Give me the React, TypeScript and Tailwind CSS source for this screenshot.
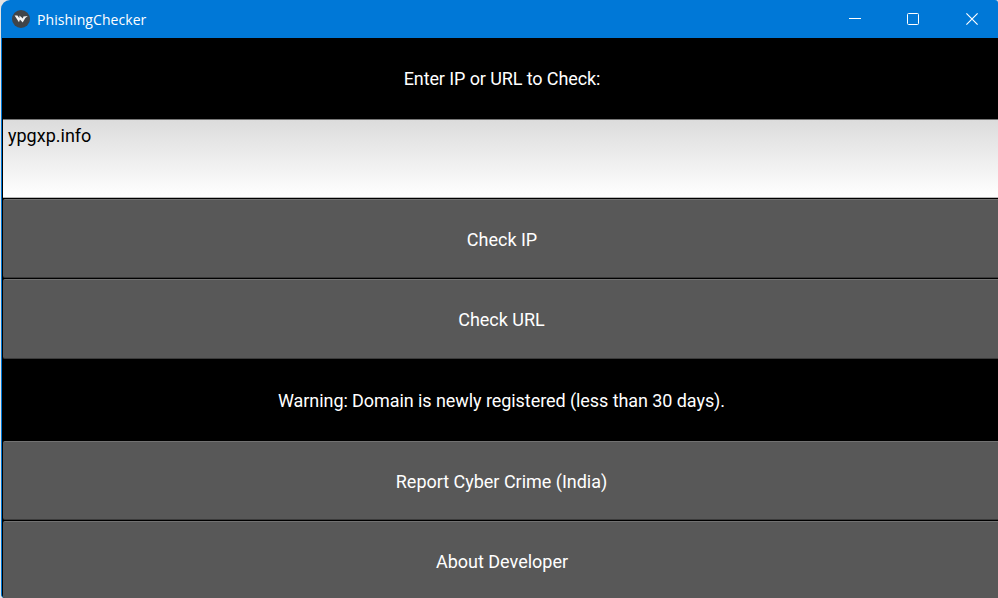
import React from "react";

function Label({ text, className }: { text: string; className: string }) {
  return (
    <div className={`flex shrink-0 items-center justify-center bg-black text-white ${className}`}>
      <span className="whitespace-nowrap">{text}</span>
    </div>
  );
}

function Button({ text, className }: { text: string; className: string }) {
  return (
    <button
      className={`flex shrink-0 items-center justify-center rounded-tl-[2px] rounded-bl-[2px] border-t border-b border-t-[#727272] border-b-[#3b3b3b] bg-[#585858] pt-[2px] text-white ${className}`}
    >
      <span className="whitespace-nowrap">{text}</span>
    </button>
  );
}

function TitleBar() {
  return (
    <header className="flex h-[38px] shrink-0 items-center rounded-tl-[9px] rounded-tr-[3px] bg-[#0078d7] pl-[11px]">
      <svg width="18" height="18" viewBox="0 0 18 18" className="shrink-0">
        <circle cx="9" cy="9" r="9" fill="#404448" />
        <path d="M2.6 5.4 5.4 5.5 7.4 8.3 7.4 5.4 10.9 8.6 11.4 6.4 15.8 6.1 13.3 8.1 10.7 12.6 7.9 9.5 7 12.2Z" fill="#f5f5f5" />
      </svg>
      <h1 className="ml-[7px] pt-[2px] font-['Open_Sans','Noto_Sans',sans-serif] text-[14px] leading-5 tracking-[0.06px] text-white">
        PhishingChecker
      </h1>
      <div className="ml-auto flex items-center pr-[20px] text-white">
        <svg width="12" height="12" viewBox="0 0 12 12" stroke="currentColor" fill="none">
          <path d="M0 5.5h12" />
        </svg>
        <svg width="12" height="12" viewBox="0 0 12 12" stroke="currentColor" fill="none" className="ml-[46px]">
          <rect x=".5" y=".5" width="11" height="11" rx="1" />
        </svg>
        <svg width="12" height="12" viewBox="0 0 12 12" stroke="currentColor" strokeWidth="1.15" fill="none" className="ml-[47px]">
          <path d="M.4.4 11.6 11.6M11.6.4.4 11.6" />
        </svg>
      </div>
    </header>
  );
}

export default function App() {
  return (
    <div className="h-[598px] w-[998px] overflow-hidden bg-[#e4e4e4] pl-px font-[Roboto,sans-serif] text-[18px] leading-[22px]">
      <TitleBar />
      <main className="h-[560px] overflow-hidden rounded-bl-[4px] border-l border-[#0078d7] bg-black pl-px">
        <div className="flex w-[998px] flex-col">
          <Label text="Enter IP or URL to Check:" className="h-[81px] tracking-[-0.1px]" />
          <div className="h-[79px] shrink-0 border-t border-b border-t-[#777777] border-b-[#bbbbbb] bg-linear-to-b from-[#dcdcdc] to-white pt-[5px] pl-[5px] text-black">
            ypgxp.info
          </div>
          <Button text="Check IP" className="mt-px h-[79px]" />
          <Button text="Check URL" className="mt-px h-[80px] pr-px" />
          <Label text="Warning: Domain is newly registered (less than 30 days)." className="h-[82px] pt-[2px] pr-px tracking-[-0.07px]" />
          <Button text="Report Cyber Crime (India)" className="h-[79px] pr-px tracking-[-0.02px]" />
          <Button text="About Developer" className="mt-px h-[80px]" />
        </div>
      </main>
    </div>
  );
}
